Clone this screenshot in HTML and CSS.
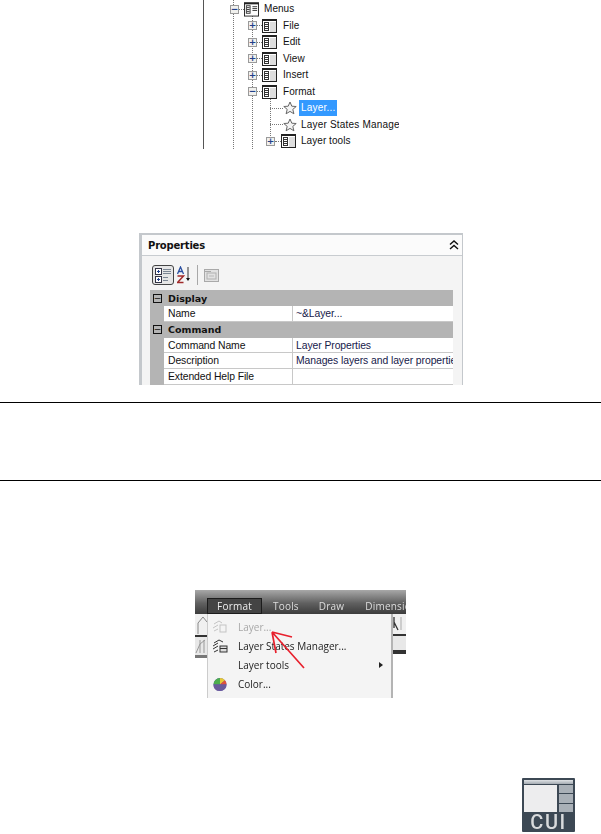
FILE: index.html
```html
<!DOCTYPE html>
<html lang="en">
<head>
<meta charset="utf-8">
<title>Customize User Interface</title>
<link rel="stylesheet" href="styles.css">
</head>
<body>
<svg class="defs" width="0" height="0" aria-hidden="true">
  <symbol id="menu-ico" viewBox="0 0 15 14">
    <rect x="0.5" y="0.5" width="14" height="13" fill="#fff" stroke="#222"/>
    <rect x="0" y="0" width="15" height="2" fill="#222"/>
    <rect x="8" y="3" width="6" height="10" fill="#dedede"/>
    <rect x="2.500" y="3.500" width="4" height="8" fill="#fff" stroke="#333"/>
    <path d="M3 5.500H6M3 7.500H6M3 9.500H6" stroke="#333" fill="none"/>
  </symbol>
  <symbol id="menus-ico" viewBox="0 0 16 15">
    <rect x="0.5" y="0.5" width="15" height="14" fill="#fff" stroke="#222"/>
    <rect x="0" y="0" width="16" height="2" fill="#222"/>
    <rect x="2.500" y="3.500" width="4" height="8" fill="#fff" stroke="#333"/>
    <path d="M3 5.500H6M3 7.500H6M3 9.500H6M9 4.500H14M9 6.500H14M9 8.500H14" stroke="#333" fill="none"/>
  </symbol>
  <symbol id="star-ico" viewBox="0 0 14 14">
    <path d="M7 1L8.800 5.200L13.200 5.500L9.800 8.400L10.900 12.800L7 10.400L3.100 12.800L4.200 8.400L0.800 5.500L5.200 5.200Z" fill="#f4f4f4" stroke="#666"/>
  </symbol>
</svg>

<section class="tree">
  <div class="vline v1"></div>
  <div class="vline v2"></div>
  <div class="vline v3"></div>
  <div class="row lv0"><span class="box">−</span><span class="dash"></span><svg class="ico"><use href="#menus-ico"/></svg><span class="lbl">Menus</span></div>
  <div class="row lv1"><span class="box">+</span><span class="dash"></span><svg class="ico"><use href="#menu-ico"/></svg><span class="lbl">File</span></div>
  <div class="row lv1"><span class="box">+</span><span class="dash"></span><svg class="ico"><use href="#menu-ico"/></svg><span class="lbl">Edit</span></div>
  <div class="row lv1"><span class="box">+</span><span class="dash"></span><svg class="ico"><use href="#menu-ico"/></svg><span class="lbl">View</span></div>
  <div class="row lv1"><span class="box">+</span><span class="dash"></span><svg class="ico"><use href="#menu-ico"/></svg><span class="lbl">Insert</span></div>
  <div class="row lv1"><span class="box">−</span><span class="dash"></span><svg class="ico"><use href="#menu-ico"/></svg><span class="lbl">Format</span></div>
  <div class="row lv2"><span class="dash long"></span><svg class="star"><use href="#star-ico"/></svg><span class="lbl sel">Layer...</span></div>
  <div class="row lv2"><span class="dash long"></span><svg class="star"><use href="#star-ico"/></svg><span class="lbl">Layer States Manager...</span></div>
  <div class="row lv3"><span class="box">+</span><span class="dash"></span><svg class="ico"><use href="#menu-ico"/></svg><span class="lbl">Layer tools</span></div>
</section>

<section class="panel">
  <header class="panel-head">
    <span class="panel-title">Properties</span>
    <svg class="chev" width="10" height="10" viewBox="0 0 10 10"><path d="M1 4.500L5 1L9 4.500M1 9L5 5.500L9 9" fill="none" stroke="#111" stroke-width="1.400"/></svg>
  </header>
  <div class="tools">
    <span class="tool-on">
      <svg width="19" height="17" viewBox="0 0 19 17">
        <rect x="1.500" y="1.500" width="6" height="6" fill="#fff" stroke="#334"/>
        <rect x="1.500" y="9.500" width="6" height="6" fill="#fff" stroke="#334"/>
        <path d="M3 4.500H6M4.500 3V6M3 12.500H6M4.500 11V14" stroke="#23408a"/>
        <path d="M9 2.500H17M9 4.500H17M9 6.500H17M9 10.500H14M9 13.500H14" stroke="#7c8794"/>
      </svg>
    </span>
    <svg class="sort" width="14" height="18" viewBox="0 0 14 18">
      <path d="M0.500 8L3.500 1L6.500 8M1.700 5.500H5.300" fill="none" stroke="#2a4fa0" stroke-width="1.300"/>
      <path d="M0.500 10H6.500L0.500 16.500H6.500" fill="none" stroke="#a02a2a" stroke-width="1.500"/>
      <path d="M11 1V14" stroke="#333"/>
      <path d="M9 12H13L11 15Z" fill="#111"/>
    </svg>
    <span class="tool-sep"></span>
    <svg width="15" height="15" viewBox="0 0 15 15"><rect x="0.500" y="1.500" width="14" height="12" fill="#e2e2e2" stroke="#a9a9a9"/><rect x="3" y="5" width="9" height="6" fill="none" stroke="#b0b0b0"/><path d="M1 3.500H7" stroke="#a9a9a9"/><path d="M5 8H10" stroke="#b8b8b8"/></svg>
  </div>
  <div class="grid">
    <div class="cat"><span class="cat-box">−</span><span>Display</span></div>
    <div class="prop"><span class="key">Name</span><span class="val">~&amp;Layer...</span></div>
    <div class="cat"><span class="cat-box">−</span><span>Command</span></div>
    <div class="prop"><span class="key">Command Name</span><span class="val">Layer Properties</span></div>
    <div class="prop"><span class="key">Description</span><span class="val">Manages layers and layer properties</span></div>
    <div class="prop"><span class="key">Extended Help File</span><span class="val"></span></div>
  </div>
</section>

<section class="note"></section>

<section class="shot">
  <nav class="bar">
    <span class="tab tab-on">Format</span>
    <span class="tab t-tools">Tools</span>
    <span class="tab t-draw">Draw</span>
    <span class="tab t-dim">Dimension</span>
  </nav>
  <div class="shot-body">
    <div class="strip strip-l">
      <span class="strip-a"><svg width="12" height="20" viewBox="0 0 12 20"><path d="M3 20V9L8 3L12 8" fill="none" stroke="#888"/></svg></span>
      <span class="strip-b"><svg width="12" height="18" viewBox="0 0 12 18"><path d="M1 16L5 7L10 3M5 3V16M9 3V16" fill="none" stroke="#999"/></svg></span>
    </div>
    <div class="menu">
      <div class="mi dis">
        <svg class="mi-ico" width="16" height="15" viewBox="0 0 16 15"><path d="M2 5L7 2L10 4M1 9L6 6M2 12L6 10" fill="none" stroke="#c4c4c4"/><rect x="8" y="6" width="6" height="7" fill="none" stroke="#c4c4c4"/></svg>
        <span>Layer...</span>
      </div>
      <div class="mi">
        <svg class="mi-ico" width="16" height="15" viewBox="0 0 16 15"><path d="M2 5L7 2L11 4M1 8L6 5M1 11L6 8M2 14L6 12" fill="none" stroke="#333"/><rect x="8" y="8" width="7" height="6" fill="#ddd" stroke="#333"/><path d="M8 10.500H15" stroke="#333"/></svg>
        <span>Layer States Manager...</span>
      </div>
      <div class="mi">
        <span class="mi-blank"></span>
        <span>Layer tools</span>
        <span class="caret"></span>
      </div>
      <div class="mi">
        <svg class="mi-ico" width="16" height="15" viewBox="0 0 16 15">
          <circle cx="8" cy="7.500" r="6.500" fill="#5a4fb0"/>
          <path d="M8 7.500L1.500 7.500A6.500 6.500 0 0 1 8 1Z" fill="#4cae4c"/>
          <path d="M8 7.500V1A6.500 6.500 0 0 1 13 3.300Z" fill="#e6c935"/>
          <path d="M8 7.500L13 3.300A6.500 6.500 0 0 1 14.500 7.500Z" fill="#e0503a"/>
          <path d="M1.500 7.500H14.500A6.500 6.500 0 0 1 10 13.700H5A6.500 6.500 0 0 1 1.500 7.500Z" fill="#6a5a9a"/>
        </svg>
        <span>Color...</span>
      </div>
    </div>
    <div class="strip strip-r">
      <span class="strip-a"><svg width="13" height="18" viewBox="0 0 13 18"><path d="M1 8L5 16M1 3V14" fill="none" stroke="#333" stroke-width="1.300"/><path d="M8 3V16" stroke="#aaa"/></svg></span>
      <span class="strip-b"></span>
    </div>
  </div>
  <svg class="arrow" width="50" height="50" viewBox="0 0 50 50"><path d="M3 3L35 39M3 3L23 8M3 3L7 24" fill="none" stroke="#e8202c" stroke-width="1.700"/></svg>
</section>

<section class="cui-row">
  <div class="cui">
    <div class="cui-top"></div>
    <div class="cui-win">
      <div class="cui-main"></div>
      <div class="cui-side"><span></span><span></span><span></span></div>
    </div>
    <div class="cui-text">CUI</div>
  </div>
</section>
</body>
</html>
```

FILE: styles.css
```css
* { box-sizing: border-box; }
html, body { margin: 0; padding: 0; background: #fff; }
body { width: 601px; height: 834px; overflow: hidden; font-family: "Liberation Sans", Arial, sans-serif; }
.defs { position: absolute; }

/* Tree */
.tree {
  position: relative;
  margin-left: 203px;
  width: 196px;
  height: 149px;
  padding-top: 1px;
  border-left: 1px solid #555;
  overflow: hidden;
  color: #111;
  font-size: 10px;
}
.vline { position: absolute; width: 0; border-left: 1px dotted #777; }
.v1 { left: 29px; top: 0; height: 149px; }
.v2 { left: 48px; top: 14px; height: 135px; }
.v3 { left: 66px; top: 96px; height: 44px; }
.row { position: relative; display: flex; align-items: center; height: 16.5px; white-space: nowrap; }
.lv0 { padding-left: 26px; }
.lv1 { padding-left: 44px; }
.lv2 { padding-left: 66px; }
.lv3 { padding-left: 62px; }
.box {
  flex: none;
  display: flex; align-items: center; justify-content: center;
  width: 9px; height: 9px;
  border: 1px solid #9a9a9a;
  background: #f1f1ee;
  color: #23408a;
  font: bold 9px/1 "DejaVu Sans", sans-serif;
}
.dash { flex: none; width: 5px; border-top: 1px dotted #777; }
.dash.long { width: 13px; }
.lv3 .dash { width: 6px; }
.ico { flex: none; width: 15px; height: 14px; }
.lv0 .ico { height: 15px; }
.star { flex: none; width: 14px; height: 14px; }
.lbl { margin-left: 3px; padding: 0 2px; letter-spacing: 0.05px; line-height: 16px; }
.lv1 .lbl { margin-left: 4px; }
.lv2 .lbl { margin-left: 2px; letter-spacing: 0.2px; }
.sel { background: #3399ff; color: #fff; flex: none; width: 38px; }

/* Properties panel */
.panel {
  margin: 84px 0 0 139px;
  width: 324px;
  height: 152px;
  background: #f4f4f4;
  border: solid #c4c8cc;
  border-width: 2px 1px 0 3px;
  overflow: hidden;
}
.panel-head {
  display: flex; align-items: center; justify-content: space-between;
  height: 21px;
  padding: 0 3px 0 6px;
  background: #fbfbfb;
  border-bottom: 1px solid #c8ccd0;
}
.panel-title { font: bold 10px "DejaVu Sans", sans-serif; letter-spacing: -0.2px; color: #111; }
.tools { display: flex; align-items: center; gap: 2px; height: 34px; padding: 4px 0 0 10px; }
.tool-on { display: flex; width: 22px; height: 20px; align-items: center; justify-content: center; background: #e6e6e6; border: 1px solid #444; border-radius: 3px; }
.sort { margin-left: 1px; }
.tool-sep { width: 1px; height: 20px; background: #a8a8a8; margin: 0 4px 0 4px; }
.grid { margin-left: 8px; width: 303px; background: #b4b4b4; font-size: 10.4px; color: #111; }
.cat {
  display: flex; align-items: center; height: 16px;
  font: bold 9.5px "DejaVu Sans", sans-serif;
}
.cat-box {
  display: flex; align-items: center; justify-content: center;
  width: 9px; height: 9px; margin: 0 6px 0 3px;
  border: 1px solid #111; font: 9px/1 "DejaVu Sans", sans-serif;
}
.prop { display: flex; height: 15.700px; margin-left: 14px; background: #fff; border-bottom: 1px solid #c8c8c8; line-height: 15px; white-space: nowrap; overflow: hidden; }
.key { flex: none; width: 129px; padding-left: 4px; border-right: 1px solid #c8c8c8; letter-spacing: -0.1px; }
.val { padding-left: 3px; color: #16204a; letter-spacing: -0.08px; }

/* Note rules */
.note { margin-top: 17px; height: 79px; border-top: 1px solid #000; border-bottom: 1px solid #000; }

/* Menu screenshot */
.shot {
  position: relative;
  margin: 109px 0 0 195px;
  width: 211px;
  height: 108px;
  overflow: hidden;
  font-family: "Open Sans", sans-serif;
  background: #fff;
  filter: blur(0.35px);
}
.bar {
  display: flex; align-items: center;
  height: 24px;
  padding: 7px 0 0 12px;
  background: linear-gradient(#a8a8a8, #606060 55%, #3c3c3c);
  color: #eee;
  font-size: 10px;
  white-space: nowrap;
  letter-spacing: 0.2px;
}
.tab { display: block; flex: none; line-height: 14px; }
.tab-on { width: 55px; text-align: center; background: #444; border: 1px solid #1c1c1c; }
.t-tools { margin-left: 11px; color: #ddd; }
.t-draw { margin-left: 20px; color: #ddd; }
.t-dim { margin-left: 21px; color: #ddd; }
.shot-body { display: flex; height: 84px; }
.strip { display: flex; flex-direction: column; flex: none; }
.strip-l { width: 12px; }
.strip-r { width: 13px; }
.strip svg { display: block; }
.strip-a { height: 23px; background: #f0f0f0; border-bottom: 2px solid #333; }
.strip-b { height: 21px; background: #e8e8e8; border-bottom: 3px solid #777; }
.strip-r .strip-a { height: 22px; }
.strip-r .strip-b { height: 18px; border-bottom-width: 4px; border-bottom-color: #333; }
.menu { flex: none; width: 186px; padding-top: 3px; background: #f4f4f4; border-left: 1px solid #ccc; border-right: 2px solid #b4b4b4; color: #222; font-size: 10px; }
.mi { display: flex; align-items: center; height: 19.200px; padding-left: 4px; }
.mi-ico, .mi-blank { flex: none; width: 16px; margin-right: 10px; }
.dis { color: #a8a8a8; }
.caret { margin-left: auto; margin-right: 8px; border-left: 4px solid #222; border-top: 3px solid transparent; border-bottom: 3px solid transparent; }
.arrow { position: absolute; left: 74px; top: 39px; }

/* CUI icon */
.cui-row { display: flex; justify-content: flex-end; padding-right: 26px; margin-top: 80px; }
.cui { width: 53px; height: 54px; padding: 2px 2px 0; background: #3c4854; border-radius: 1px; filter: blur(0.5px); }
.cui-top { height: 4px; background: linear-gradient(#dfe2e5, #a4abb2); }
.cui-win { display: flex; gap: 2px; height: 27px; margin-top: 1px; }
.cui-main { width: 33px; background: #ededee; }
.cui-side { flex: 1; display: flex; flex-direction: column; gap: 1px; }
.cui-side span { flex: 1; background: #a9b0b7; }
.cui-text { text-align: center; color: #d8dadc; font: 500 20px/20px "Roboto", sans-serif; letter-spacing: 1.500px; }
```
